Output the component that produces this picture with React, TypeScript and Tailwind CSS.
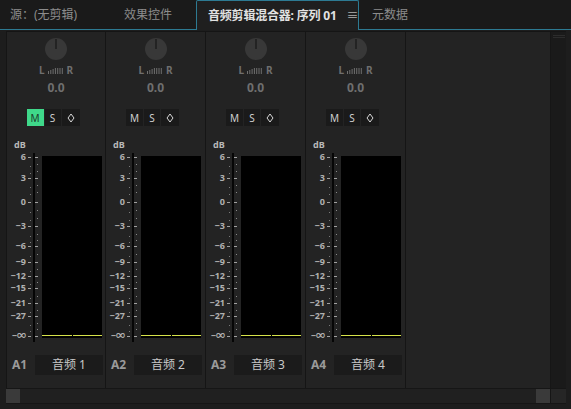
import React from 'react';

const FONT = '"Noto Sans", "Noto Sans CJK SC", sans-serif';

const scale = [
  { label: '6', y: 4 },
  { label: '3', y: 25 },
  { label: '0', y: 49 },
  { label: '−3', y: 73 },
  { label: '−6', y: 93 },
  { label: '−9', y: 109 },
  { label: '−12', y: 123 },
  { label: '−15', y: 135 },
  { label: '−21', y: 150 },
  { label: '−27', y: 163 },
  { label: '−∞', y: 183 },
];

const dots = [11, 18, 32, 39, 57, 65, 81, 87, 101, 116, 129, 143, 157, 170, 176];

function Knob() {
  return (
    <svg width="24" height="24" viewBox="0 0 24 24">
      <circle cx="12" cy="12" r="11" fill="#383838" />
      <line x1="12" y1="12" x2="12" y2="2" stroke="#1c1c1c" strokeWidth="1.5" />
    </svg>
  );
}

function Strip({ id, name, first }: { id: string; name: string; first?: boolean }) {
  return (
    <div
      className={`w-[100px] shrink-0 border-r border-[#151515] flex flex-col items-center ${first ? 'border-l' : ''}`}
    >
      <div className="mt-[5px]">
        <Knob />
      </div>
      <div className="mt-[4px] flex items-center gap-[3px] text-[10px] font-bold text-[#6f6f6f] leading-none">
        <span>L</span>
        <svg width="16" height="8" viewBox="0 0 16 8">
          {[0, 1, 2, 3, 4, 5, 6].map(i => (
            <rect key={i} x={i * 2.3} y={i < 3 ? 5 - i : 2} width="1" height={i < 3 ? 3 + i : 6} fill="#6f6f6f" />
          ))}
        </svg>
        <span>R</span>
      </div>
      <div className="mt-[7px] text-[12px] font-bold text-[#6f6f6f] leading-none">0.0</div>
      <div className="mt-[15px] flex gap-[1px] -ml-[6px]">
        <div
          className={`w-[17px] h-[17px] flex items-center justify-center text-[10px] leading-none ${
            first ? 'bg-[#3fd88a] text-[#1c3a2a]' : 'bg-[#1a1a1a] text-[#d0d0d0]'
          }`}
        >
          M
        </div>
        <div className="w-[16px] h-[17px] flex items-center justify-center text-[10px] leading-none bg-[#1a1a1a] text-[#d0d0d0]">
          S
        </div>
        <div className="w-[18px] h-[17px] flex items-center justify-center bg-[#1a1a1a]">
          <svg width="8" height="10" viewBox="0 0 8 10">
            <path d="M4 1 L7 5 L4 9 L1 5 Z" fill="none" stroke="#d8d8d8" strokeWidth="1" />
          </svg>
        </div>
      </div>
      <div className="self-stretch mt-[27px] relative h-[190px]">
        <div className="absolute left-[7px] -top-[13px] text-[9px] font-bold text-[#b8b8b8] leading-[9px]">dB</div>
        <div className="absolute left-[26px] top-0 w-[2px] h-[189px] bg-[#050505]" />
        {scale.map(s => (
          <div key={s.label} className="absolute left-0 w-[34px] h-[8px] flex items-center" style={{ top: s.y - 4 }}>
            <span className="w-[19px] text-right text-[9px] font-bold text-[#b0b0b0] leading-[8px]">{s.label}</span>
            <span className="ml-[2px] w-[3px] h-[1px] bg-[#a0a0a0]" />
            <span className="ml-[4px] w-[3px] h-[1px] bg-[#a0a0a0]" />
          </div>
        ))}
        {dots.map(d => (
          <div key={d} className="absolute left-[30px] w-[1px] h-[1px] bg-[#8a8a8a]" style={{ top: d }} />
        ))}
        {dots.map(d => (
          <div key={'l' + d} className="absolute left-[23px] w-[1px] h-[1px] bg-[#7a7a7a]" style={{ top: d + 2 }} />
        ))}
        <div className="absolute left-[35px] top-[3px] w-[60px] h-[182px] bg-black flex items-end pb-[2px]">
          <div className="flex-1 h-[1.5px] bg-[#d6e24a] mr-[1px]" />
          <div className="flex-1 h-[1.5px] bg-[#d6e24a]" />
        </div>
      </div>
      <div className="mt-[12px] self-stretch flex items-center">
        <span className="w-[28px] pl-[5px] text-[12px] font-bold text-[#9a9a9a]">{id}</span>
        <div className="w-[68px] h-[20px] bg-[#1b1b1b] flex items-center justify-center text-[12px] text-[#c8c8c8]">
          {name}
        </div>
      </div>
    </div>
  );
}

export default function App() {
  return (
    <div className="w-[571px] h-[409px] bg-[#1d1d1d] overflow-hidden flex flex-col" style={{ fontFamily: FONT }}>
      {/* Tabs */}
      <div className="h-[30px] flex items-stretch bg-[#1a1a1a] text-[12px] whitespace-nowrap">
        <div className="w-[107px] flex items-center pl-[10px] text-[#8c8c8c] border-b border-[#2d7a92]">源：(无剪辑)</div>
        <div className="w-[89px] flex items-center pl-[17px] text-[#8c8c8c] border-b border-[#2d7a92]">效果控件</div>
        <div className="w-[163px] flex items-center pl-[11px] bg-[#1f1f1f] text-[#e2e2e2] font-bold border border-b-0 border-[#2d7a92] rounded-t-[2px]">
          <span className="tracking-[-0.2px]">音频剪辑混合器: 序列 01</span>
          <span className="ml-[10px] font-normal text-[#b0b0b0]">≡</span>
        </div>
        <div className="flex-1 flex items-center pl-[13px] text-[#8c8c8c] border-b border-[#2d7a92]">元数据</div>
      </div>
      {/* Body */}
      <div className="flex-1 flex flex-col pl-[6px] pr-[5px] pt-[1px]">
        <div className="flex-1 flex border-t border-[#151515] bg-[#232323]">
          <Strip id="A1" name="音频 1" first />
          <Strip id="A2" name="音频 2" />
          <Strip id="A3" name="音频 3" />
          <Strip id="A4" name="音频 4" />
          <div className="flex-1" />
          <div className="w-[16px] bg-[#1a1a1a] border-l border-[#161616] pt-[3px] flex justify-center">
            <div className="w-[12px] h-[3px] border-t border-b border-[#2c2c2c]" />
          </div>
        </div>
        <div className="h-[16px] flex bg-[#202020] border-t border-b border-[#161616]">
          <div className="w-[14px] bg-[#3a3a3a]" />
          <div className="flex-1" />
          <div className="w-[14px] bg-[#3a3a3a]" />
          <div className="w-[16px] bg-[#262626] border-l border-[#161616]" />
        </div>
        <div className="h-[5px]" />
      </div>
    </div>
  );
}
